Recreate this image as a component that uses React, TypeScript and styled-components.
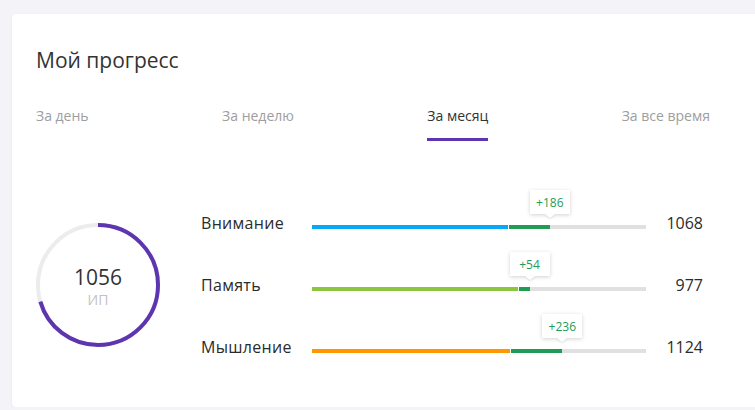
import React, { FC } from 'react';
import styled, { createGlobalStyle } from 'styled-components';

const MAX = 1500;
const purple = '#5e35b1';
const gain = '#1f9d55';

const GlobalStyle = createGlobalStyle`
  html, body {
    margin: 0;
    padding: 0;
    background: #f4f3f8;
    overflow: hidden;
  }
  body {
    font-family: 'Open Sans', 'Noto Sans', sans-serif;
    color: #333;
  }
`;

const Page = styled.div`
  padding: 14px 0 0 12px;
`;

const Card = styled.div`
  width: 743px;
  height: 393px;
  box-sizing: border-box;
  padding: 32px 45px 0 24px;
  background: #fff;
  border-radius: 4px 0 0 4px;
  box-shadow: 0 1px 3px rgba(0, 0, 0, 0.06);
`;

const Title = styled.h2`
  margin: 0;
  font-size: 21px;
  line-height: 28px;
  font-weight: 400;
  color: #333;
`;

const Tabs = styled.div`
  display: flex;
  justify-content: space-between;
  margin-top: 32px;
`;

const Tab = styled.div<{ active?: boolean }>`
  font-size: 14px;
  line-height: 20px;
  padding-bottom: 12px;
  color: ${({ active }) => (active ? '#333' : '#9e9e9e')};
  border-bottom: 3px solid ${({ active }) => (active ? purple : 'transparent')};
`;

const Main = styled.div`
  display: flex;
  align-items: center;
  gap: 41px;
  margin-top: 51px;
`;

const Ring = styled.div`
  display: grid;
  width: 124px;
  height: 124px;
  flex: 0 0 124px;
  & > * {
    grid-area: 1 / 1;
  }
`;

const RingCenter = styled.div`
  display: flex;
  flex-direction: column;
  align-items: center;
  justify-content: center;
  padding-top: 2px;
`;

const Score = styled.div`
  font-size: 21px;
  line-height: 24px;
  color: #333;
`;

const Unit = styled.div`
  font-size: 14px;
  line-height: 16px;
  color: #c2c2c2;
  margin-top: 3px;
`;

const Rows = styled.div`
  flex: 1;
  padding-right: 7px;
`;

const Row = styled.div`
  display: grid;
  grid-template-columns: 111px 1fr 57px;
  align-items: center;
  height: 62px;
`;

const Label = styled.div`
  font-size: 16px;
  line-height: 22px;
  font-weight: 500;
  letter-spacing: 0.3px;
  color: #2b2b2b;
`;

const Value = styled.div`
  font-size: 16px;
  line-height: 22px;
  text-align: right;
  color: #2b2b2b;
`;

const BarWrap = styled.div`
  padding-top: 8px;
`;

const Track = styled.div`
  position: relative;
  display: flex;
  height: 4px;
  background: #e0e0e0;
`;

const Segment = styled.div<{ color: string }>`
  height: 100%;
  background: ${({ color }) => color};
`;

const Gain = styled.div`
  height: 100%;
  box-sizing: border-box;
  border-left: 1px solid #fff;
  background: ${gain};
`;

const Tip = styled.div`
  position: absolute;
  bottom: 15px;
  transform: translateX(-50%);
  width: 40px;
  height: 24px;
  display: flex;
  align-items: center;
  justify-content: center;
  background: #fff;
  font-size: 12px;
  color: ${gain};
  box-shadow: 0 1px 4px rgba(0, 0, 0, 0.18);
  &::after {
    content: '';
    position: absolute;
    left: 50%;
    top: 100%;
    margin-left: -5px;
    border: 5px solid transparent;
    border-top: 4px solid #fff;
    border-bottom: 0;
    filter: drop-shadow(0 1px 1px rgba(0, 0, 0, 0.12));
  }
`;

type Skill = { name: string; value: number; delta: number; color: string };

const skills: Skill[] = [
  { name: 'Внимание', value: 1068, delta: 186, color: '#03a9f4' },
  { name: 'Память', value: 977, delta: 54, color: '#8cc63f' },
  { name: 'Мышление', value: 1124, delta: 236, color: '#ff9800' },
];

const tabs = ['За день', 'За неделю', 'За месяц', 'За все время'];

const pct = (v: number) => `${(v / MAX) * 100}%`;

const ProgressRing: FC<{ value: number }> = ({ value }) => {
  const r = 60;
  const len = 2 * Math.PI * r;
  return (
    <Ring>
      <svg width="124" height="124" viewBox="0 0 124 124">
        <circle cx="62" cy="62" r={r} fill="none" stroke="#ececec" strokeWidth="4" />
        <circle
          cx="62"
          cy="62"
          r={r}
          fill="none"
          stroke={purple}
          strokeWidth="4"
          strokeDasharray={`${(value / MAX) * len} ${len}`}
          transform="rotate(-90 62 62)"
        />
      </svg>
      <RingCenter>
        <Score>{value}</Score>
        <Unit>ИП</Unit>
      </RingCenter>
    </Ring>
  );
};

export default function App() {
  return (
    <Page>
      <GlobalStyle />
      <Card>
        <Title>Мой прогресс</Title>
        <Tabs>
          {tabs.map((t) => (
            <Tab key={t} active={t === 'За месяц'}>
              {t}
            </Tab>
          ))}
        </Tabs>
        <Main>
          <ProgressRing value={1056} />
          <Rows>
            {skills.map((s) => (
              <Row key={s.name}>
                <Label>{s.name}</Label>
                <BarWrap>
                  <Track>
                    <Segment color={s.color} style={{ width: pct(s.value - s.delta) }} />
                    <Gain style={{ width: pct(s.delta) }} />
                    <Tip style={{ left: pct(s.value) }}>+{s.delta}</Tip>
                  </Track>
                </BarWrap>
                <Value>{s.value}</Value>
              </Row>
            ))}
          </Rows>
        </Main>
      </Card>
    </Page>
  );
}
